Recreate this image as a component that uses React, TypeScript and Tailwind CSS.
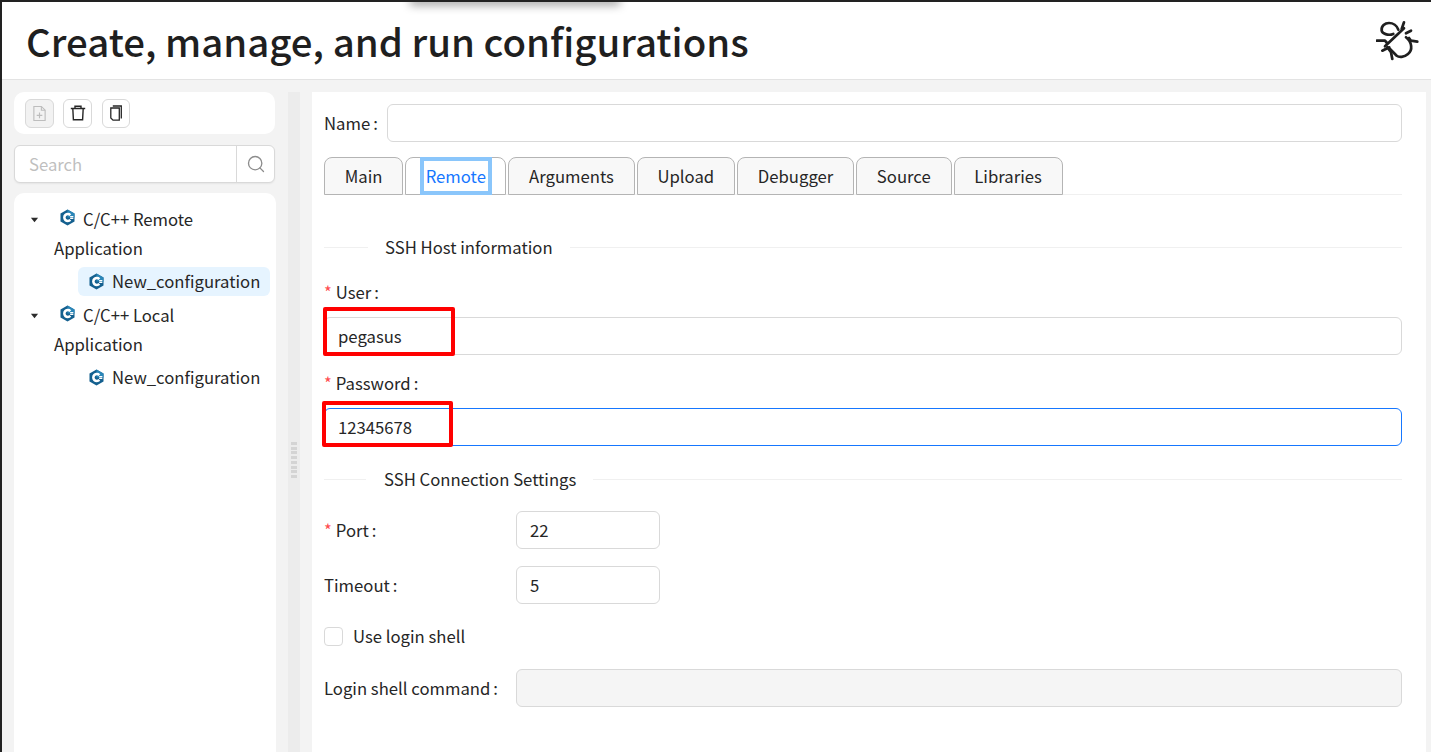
import React from "react";
import { Search } from "lucide-react";

const tabs = ["Main", "Remote", "Arguments", "Upload", "Debugger", "Source", "Libraries"];

const inputClass = "h-[38px] rounded-[6px] border px-[13px] flex items-center";

const CppIcon = () => (
  <svg viewBox="0 0 16 16" className="size-[17px] shrink-0">
    <path d="M8 .5 14.6 4.200v7.600L8 15.500 1.400 11.800V4.200z" fill="#14608f" />
    <path d="M8 .5 14.6 4.200V8H8z" fill="#2a86b8" />
    <path d="M10.700 5.700A3.300 3.300 0 1 0 10.700 10.300" fill="none" stroke="#fff" strokeWidth="2.400" />
    <path d="M10.500 7.200h3M10.500 8.800h3" stroke="#fff" strokeWidth="1" />
  </svg>
);

const Caret = () => (
  <svg viewBox="0 0 10 6" className="h-[6px] w-[9px]">
    <path d="M1 .5h8L5 5.500z" fill="#2b2b2b" />
  </svg>
);

const TreeGroup = ({ title, selected }: { title: string; selected?: boolean }) => (
  <div>
    <div className="relative pl-[40px] pr-2 leading-[29px]">
      <span className="absolute left-[16px] top-[12px] flex">
        <Caret />
      </span>
      <span className="absolute left-[45px] top-[4px] flex">
        <CppIcon />
      </span>
      <span className="ml-[29px]">{title}</span>
      <br />
      Application
    </div>
    <div
      className={`ml-[64px] mr-[6px] mt-[4px] flex h-[29px] items-center gap-[7px] rounded-[6px] pl-[10px] ${selected ? "bg-[#e6f4ff]" : ""}`}
    >
      <CppIcon />
      <span>New_configuration</span>
    </div>
  </div>
);

const Divider = ({ title, left, gap }: { title: string; left: number; gap: string }) => (
  <div className="flex items-center">
    <div className="h-px bg-[#f0f0f0]" style={{ width: left }} />
    <span className={gap}>{title}</span>
    <div className="h-px flex-1 bg-[#f0f0f0]" />
  </div>
);

const Req = () => <span className="mr-[4px] text-[#ff4d4f]">*</span>;
const Colon = () => <span className="ml-[3px]">:</span>;

export default function App() {
  return (
    <div className="relative h-[752px] w-[1431px] overflow-hidden border-l-2 border-t-2 border-[#222222] bg-[#f3f3f3] font-['Noto_Sans_CJK_SC','Noto_Sans',sans-serif] text-[16.700px] text-[#262626]">
      <div className="absolute left-[408px] top-[-8px] h-[8px] w-[210px] shadow-[0_3px_10px_rgba(0,0,0,0.4)]" />
      <header className="flex h-[78px] items-center justify-between border-b border-[#e3e3e3] bg-white pl-[24px] pr-[11px]">
        <h1 className="text-[38.400px] font-medium leading-none text-[#1f1f1f]">Create, manage, and run configurations</h1>
        <svg viewBox="0 0 44 44" className="mt-[1px] size-[44px]" fill="none" stroke="#1f1f1f" strokeWidth="2.700" strokeLinecap="round" strokeLinejoin="round">
          <path d="M28 9.300 9 27.300" />
          <path d="M30 18.300C36 23 37 31 32 35 28 38.500 23 38.500 20.700 36.700L14 30" />
          <path d="M17.300 15C12 17 6 14.500 5.700 11.700 5 7 9 4 13 4 17 4 21 6.500 22.300 10.700" />
          <path d="M28 3.300 25.700 10" />
          <path d="M35 11.700 30 14.300" />
          <path d="M41.300 22.700 35 21.700 33 19" />
          <path d="M.7 21.700H9L11 24" />
          <path d="M6.300 31.700 13.300 28.300" />
          <path d="M16.300 40 15 33.300 11.300 28.300" />
        </svg>
      </header>

      <div className="flex h-[672px] pt-[12px]">
        <aside className="ml-[12px] flex w-[262px] flex-col">
          <div className="mr-px flex h-[42px] items-center rounded-[10px] bg-white pl-[11px]">
            <button className="flex h-[29px] w-[29px] items-center justify-center rounded-[6px] border border-[#d9d9d9] bg-[#f2f2f2]">
              <svg viewBox="0 0 16 18" className="h-[17px] w-[15px]" fill="none" stroke="#bdbdbd" strokeWidth="1.200">
                <path d="M2 1.500h8l4 4v11H2z" />
                <path d="M10 1.500v4h4M8 8v6M5 11h6" />
              </svg>
            </button>
            <button className="ml-[9px] flex h-[29px] w-[29px] items-center justify-center rounded-[6px] border border-[#d9d9d9] bg-white">
              <svg viewBox="0 0 16 16" className="size-[16px]" fill="none" stroke="#262626" strokeWidth="1.400">
                <path d="M.8 3.500h14.400M5 3.500V1.200h6v2.300M2.800 3.500l.6 11.300h9.200l.6-11.300" />
              </svg>
            </button>
            <button className="ml-[10px] flex h-[29px] w-[28px] items-center justify-center rounded-[6px] border border-[#d9d9d9] bg-white">
              <svg viewBox="0 0 12 16" className="h-[16px] w-[12px]" fill="none" stroke="#262626" strokeWidth="1.300">
                <path d="M2.800 1h8.500v12.500" />
                <path d="M.8 3h8.500v12.200H3L.8 13z" />
              </svg>
            </button>
          </div>

          <div className="mr-px mt-[11px] flex h-[38px] rounded-[6px] border border-[#d9d9d9] bg-white shadow-[0_1px_2px_rgba(0,0,0,0.06)]">
            <div className="flex flex-1 items-center pl-[14px] pt-[2px] text-[#bfbfbf]">Search</div>
            <div className="flex w-[38px] items-center justify-center border-l border-[#d9d9d9]">
              <Search size={20} strokeWidth={1.600} className="text-[#8c8c8c]" />
            </div>
          </div>

          <div className="mt-[10px] flex flex-1 flex-col gap-[5px] rounded-t-[10px] bg-white pt-[12px]">
            <TreeGroup title="C/C++ Remote" selected />
            <TreeGroup title="C/C++ Local" />
          </div>
        </aside>

        <div className="ml-[12px] flex w-[12px] flex-col items-center justify-center bg-[#ececec]">
          <div className="mt-[76px] grid grid-cols-2 gap-y-[1.700px]">
            {Array.from({ length: 16 }).map((_, i) => (
              <div key={i} className="h-[3px] w-[3px] bg-[#d4d4d4]" />
            ))}
          </div>
        </div>

        <main className="ml-[12px] w-[1114px] bg-white pl-[12px] pr-[24px] pt-[12px]">
          <div className="flex items-center">
            <span className="w-[63px] pt-[2px]">Name<Colon /></span>
            <div className={`${inputClass} flex-1 border-[#d9d9d9]`} />
          </div>

          <div className="mt-[15px] flex h-[38px] gap-[2px] border-b border-[#f0f0f0]">
            {tabs.map((t) =>
              t === "Remote" ? (
                <div key={t} className="flex h-[38px] w-[101px] justify-center rounded-t-[8px] border border-[#b4b4b4] bg-white">
                  <span className="-mt-px h-[38px] border-4 border-[#8ac6fb] px-[2px] leading-[31px] text-[#1677ff]">{t}</span>
                </div>
              ) : (
                <div key={t} className="flex h-[38px] items-center rounded-t-[8px] border border-[#b4b4b4] bg-[#f8f8f8] px-[19.800px] pt-[2px]">
                  {t}
                </div>
              ),
            )}
          </div>

          <div className="mt-[40px]">
            <Divider title="SSH Host information" left={44} gap="px-[17px]" />
          </div>

          <div className="mt-[20px] leading-[24px]">
            <Req />User<Colon />
          </div>
          <div className="relative mt-[13px]">
            <div className={`${inputClass} border-[#d9d9d9]`}>pegasus</div>
            <div className="absolute left-[-1px] top-[-10px] h-[49px] w-[132px] rounded-[2px] border-[4px] border-[#ff0000]" />
          </div>

          <div className="mt-[16px] leading-[24px]">
            <Req />Password<Colon />
          </div>
          <div className="relative mt-[13px]">
            <div className={`${inputClass} border-[#1677ff]`}>12345678</div>
            <div className="absolute left-[-2px] top-[-7px] h-[46px] w-[131px] rounded-[2px] border-[4px] border-[#ff0000]" />
          </div>

          <div className="mt-[21px]">
            <Divider title="SSH Connection Settings" left={42} gap="pl-[18px] pr-[17px]" />
          </div>

          <div className="mt-[19px] flex items-center">
            <span className="w-[192px]"><Req />Port<Colon /></span>
            <div className={`${inputClass} w-[144px] border-[#d9d9d9]`}>22</div>
          </div>
          <div className="mt-[17px] flex items-center">
            <span className="w-[192px]">Timeout<Colon /></span>
            <div className={`${inputClass} w-[144px] border-[#d9d9d9]`}>5</div>
          </div>
          <div className="mt-[20px] flex items-center gap-[10px]">
            <div className="size-[19px] rounded-[4px] border border-[#d9d9d9] bg-white" />
            <span>Use login shell</span>
          </div>
          <div className="mt-[20px] flex items-center">
            <span className="w-[192px]">Login shell command<Colon /></span>
            <div className={`${inputClass} flex-1 border-[#d9d9d9] bg-[#f5f5f5]`} />
          </div>
        </main>
      </div>
    </div>
  );
}
